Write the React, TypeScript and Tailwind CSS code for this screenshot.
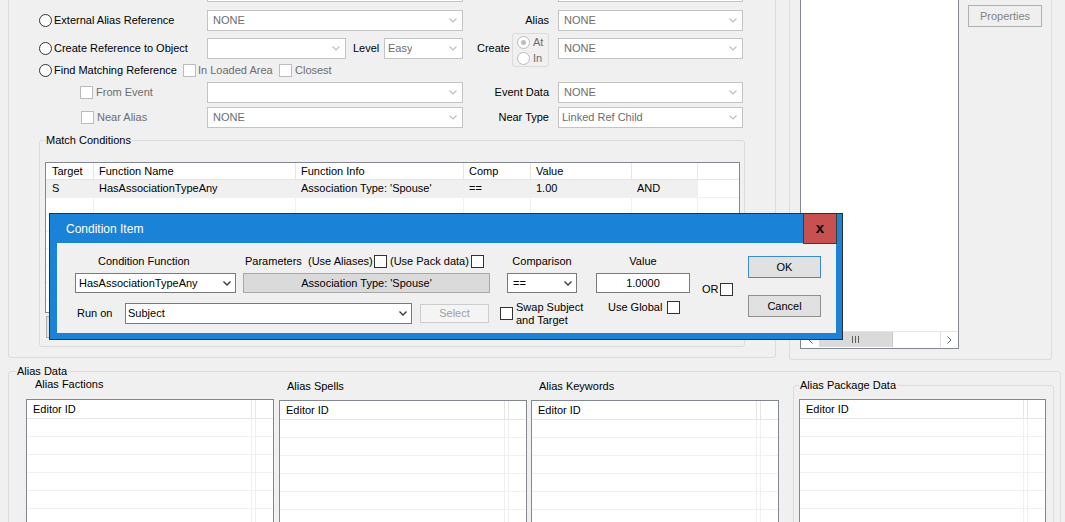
import clsx from 'clsx';

function Chevron({ dark = false }: { dark?: boolean }) {
  return (
    <svg width="8" height="5" viewBox="0 0 8 5" className="shrink-0">
      <path d="M0.5 0.5 L4 4 L7.5 0.5" fill="none" stroke={dark ? '#3a3a3a' : '#bdbdbd'} strokeWidth={dark ? 1.4 : 1.1} />
    </svg>
  );
}

function Combo({ text = '', dark = false, className = '' }: { text?: string; dark?: boolean; className?: string }) {
  return (
    <div
      className={clsx(
        'flex shrink-0 items-center justify-between border bg-white pr-[5px]',
        dark ? 'border-[#7a7a7a] text-black' : 'border-[#c4c4c4] pl-[5px] text-[#6d6d6d]',
        className
      )}
    >
      <span className="truncate">{text}</span>
      <Chevron dark={dark} />
    </div>
  );
}

function Check({ disabled = false }: { disabled?: boolean }) {
  return (
    <span
      className={clsx(
        'block h-[13px] w-[13px] shrink-0 border bg-white',
        disabled ? 'border-[#bcbcbc]' : 'border-[#333333]'
      )}
    />
  );
}

function Radio({ checked = false, disabled = false }: { checked?: boolean; disabled?: boolean }) {
  return (
    <span
      className={clsx(
        'flex h-[13px] w-[13px] shrink-0 items-center justify-center rounded-full border bg-white',
        disabled ? 'border-[#bcbcbc]' : 'border-[#333333]'
      )}
    >
      {checked && <span className={clsx('h-[5px] w-[5px] rounded-full', disabled ? 'bg-[#bcbcbc]' : 'bg-[#333333]')} />}
    </span>
  );
}

const matchCols = [
  { w: 'w-[48px] pl-[6px]', h: 'Target', v: 'S' },
  { w: 'w-[202px] pl-[5px]', h: 'Function Name', v: 'HasAssociationTypeAny' },
  { w: 'w-[168px] pl-[5px]', h: 'Function Info', v: "Association Type: 'Spouse'" },
  { w: 'w-[67px] pl-[5px]', h: 'Comp', v: '==' },
  { w: 'w-[101px] pl-[5px]', h: 'Value', v: '1.00' },
  { w: 'w-[66px] pl-[5px]', h: '', v: 'AND' },
];

function MatchList() {
  return (
    <div className="ml-[5px] mt-[15px] h-[151px] w-[695px] overflow-hidden border border-[#828790] bg-white">
      <div className="flex h-[17px] border-b border-[#e5e5e5]">
        {matchCols.map((c, i) => (
          <div key={i} className={clsx('shrink-0 border-r border-[#e5e5e5] leading-[16px]', c.w)}>
            {c.h}
          </div>
        ))}
      </div>
      <div className="flex h-[17px]">
        {matchCols.map((c, i) => (
          <div key={i} className={clsx('shrink-0 border-r border-[#f0f0f0] bg-[#f0f0f0] leading-[17px]', c.w)}>
            {c.v}
          </div>
        ))}
      </div>
      {[0, 1, 2, 3, 4, 5, 6].map((r) => (
        <div key={r} className="flex h-[17px] border-t border-[#f0f0f0]">
          {matchCols.map((c, i) => (
            <div key={i} className={clsx('shrink-0 border-r border-[#f0f0f0]', c.w)} />
          ))}
        </div>
      ))}
    </div>
  );
}

function EditorList({ className = '' }: { className?: string }) {
  return (
    <div className={clsx('h-[140px] overflow-hidden border border-[#828790] bg-white', className)}>
      <div className="flex h-[19px] border-b border-[#e5e5e5]">
        <div className="flex-1 border-r border-[#e5e5e5] pl-[6px] leading-[18px]">Editor ID</div>
        <div className="w-[4px] border-r border-[#e5e5e5]" />
        <div className="w-[17px]" />
      </div>
      {[0, 1, 2, 3, 4, 5, 6].map((r) => (
        <div key={r} className="flex h-[18px] border-b border-[#f0f0f0]">
          <div className="flex-1 border-r border-[#f0f0f0]" />
          <div className="w-[4px] border-r border-[#f0f0f0]" />
          <div className="w-[17px]" />
        </div>
      ))}
    </div>
  );
}

function LeftGroup() {
  return (
    <div className="ml-[8px] h-[358px] w-[768px] shrink-0 rounded-b-[3px] border-x border-b border-[#dcdcdc]">
      {/* row cut off at the top */}
      <div className="-mt-[18px] flex h-[20px]">
        <Combo className="ml-[198px] h-[20px] w-[256px]" />
        <Combo className="ml-[95px] h-[20px] w-[185px]" />
      </div>

      <div className="mt-[8px] flex h-[21px] items-center">
        <label className="ml-[30px] flex w-[168px] items-center gap-[2px]">
          <Radio />
          <span>External Alias Reference</span>
        </label>
        <Combo text="NONE" className="h-[21px] w-[256px]" />
        <span className="w-[86px] text-right">Alias</span>
        <Combo text="NONE" className="ml-[9px] h-[21px] w-[185px]" />
      </div>

      <div className="flex h-[34px] items-center">
        <label className="ml-[30px] flex w-[168px] items-center gap-[2px]">
          <Radio />
          <span>Create Reference to Object</span>
        </label>
        <Combo className="h-[21px] w-[139px]" />
        <span className="ml-[7px] w-[31px]">Level</span>
        <Combo text="Easy" className="h-[21px] w-[79px] !pl-[3px]" />
        <span className="w-[48px] pr-[1px] text-right">Create</span>
        <div className="ml-[1px] mt-[4px] flex h-[34px] w-[37px] flex-col justify-center gap-[3px] rounded-[3px] border border-[#dcdcdc] pl-[4px] text-[#6d6d6d]">
          <div className="flex items-center gap-[3px]">
            <Radio checked disabled />
            <span>At</span>
          </div>
          <div className="flex items-center gap-[3px]">
            <Radio disabled />
            <span>In</span>
          </div>
        </div>
        <Combo text="NONE" className="ml-[9px] h-[21px] w-[185px]" />
      </div>

      <div className="flex h-[10px] items-center">
        <label className="ml-[30px] flex w-[144px] items-center gap-[2px]">
          <Radio />
          <span>Find Matching Reference</span>
        </label>
        <div className="flex w-[96px] items-center gap-[2px] text-[#6d6d6d]">
          <Check disabled />
          <span>In Loaded Area</span>
        </div>
        <div className="flex items-center gap-[3px] text-[#6d6d6d]">
          <Check disabled />
          <span>Closest</span>
        </div>
      </div>

      <div className="mt-[7px] flex h-[21px] items-center">
        <div className="ml-[71px] flex w-[127px] items-center gap-[3px] text-[#6d6d6d]">
          <Check disabled />
          <span>From Event</span>
        </div>
        <Combo className="h-[21px] w-[256px]" />
        <span className="w-[86px] text-right">Event Data</span>
        <Combo text="NONE" className="ml-[9px] h-[21px] w-[185px]" />
      </div>

      <div className="mt-[4px] flex h-[21px] items-center">
        <div className="ml-[72px] flex w-[126px] items-center gap-[3px] text-[#6d6d6d]">
          <Check disabled />
          <span>Near Alias</span>
        </div>
        <Combo text="NONE" className="h-[21px] w-[256px]" />
        <span className="w-[86px] text-right">Near Type</span>
        <Combo text="Linked Ref Child" className="ml-[9px] h-[21px] w-[185px] !pl-[3px]" />
      </div>

      <fieldset className="ml-[30px] mt-[6px] h-[213px] w-[706px] rounded-[3px] border border-[#dcdcdc]">
        <legend className="ml-[5px] px-[1px] leading-[13px]">Match Conditions</legend>
        <MatchList />
        <div className="ml-[6px] mt-[3px] h-[22px] w-[70px] border border-[#adadad] bg-[#e1e1e1]" />
      </fieldset>
    </div>
  );
}

function RightGroup() {
  return (
    <div className="ml-[13px] flex h-[360px] w-[263px] shrink-0 rounded-b-[3px] border-x border-b border-[#dcdcdc]">
      <div className="ml-[10px] flex h-[349px] w-[159px] flex-col border-x border-b border-[#828790] bg-white">
        <div className="mx-[1px] mb-[1px] mt-auto flex h-[16px] border-t border-[#e6e6e6]">
          <div className="flex w-[17px] items-center justify-center">
            <svg width="5" height="8" viewBox="0 0 5 8">
              <path d="M4.5 0.5 L1 4 L4.5 7.5" fill="none" stroke="#606060" />
            </svg>
          </div>
          <div className="flex w-[74px] items-center justify-center border-r border-[#c8c8c8] bg-[#dadada]">
            <svg width="7" height="7" viewBox="0 0 7 7">
              <path d="M0.5 0 V7 M3.5 0 V7 M6.5 0 V7" stroke="#606060" />
            </svg>
          </div>
          <div className="flex-1" />
          <div className="flex w-[17px] items-center justify-center border-l border-[#e0e0e0]">
            <svg width="5" height="8" viewBox="0 0 5 8">
              <path d="M0.5 0.5 L4 4 L0.5 7.5" fill="none" stroke="#606060" />
            </svg>
          </div>
        </div>
      </div>
      <button className="ml-[9px] mt-[5px] h-[22px] w-[74px] border border-[#b0b0b0] bg-[#efefef] text-[#838383]">
        Properties
      </button>
    </div>
  );
}

function AliasData() {
  return (
    <fieldset className="ml-[8px] mt-[5px] h-[200px] w-[1053px] rounded-[3px] border border-[#dcdcdc]">
      <legend className="ml-[7px] px-[1px] leading-[13px]">Alias Data</legend>
      <div className="flex items-start">
        <div className="ml-[17px] w-[248px]">
          <div className="pl-[9px]">Alias Factions</div>
          <EditorList className="mt-[8px]" />
        </div>
        <div className="ml-[5px] w-[248px]">
          <div className="mt-[2px] pl-[8px]">Alias Spells</div>
          <EditorList className="mt-[7px]" />
        </div>
        <div className="ml-[4px] w-[248px]">
          <div className="mt-[2px] pl-[8px]">Alias Keywords</div>
          <EditorList className="mt-[7px]" />
        </div>
        <fieldset className="ml-[14px] mt-[1px] h-[160px] w-[261px] rounded-[3px] border border-[#dcdcdc]">
          <legend className="ml-[5px] px-[1px] leading-[13px]">Alias Package Data</legend>
          <EditorList className="ml-[5px] mt-[7px] w-[247px]" />
        </fieldset>
      </div>
    </fieldset>
  );
}

function ConditionDialog() {
  return (
    <div className="absolute left-[49px] top-[213px] h-[127px] w-[794px] border border-[#2f2f2f] bg-[#1a83d8]">
      <div className="flex h-[29px]">
        <div className="flex-1 pl-[16px] text-[12px] leading-[30px] text-white">Condition Item</div>
        <div className="mr-[5px] flex h-[30px] w-[34px] items-center justify-center border-x border-b border-[#3c3c3c] bg-[#c75050] pb-[3px] text-[15px] font-bold text-black">
          x
        </div>
      </div>
      <div className="ml-[7px] flex h-[90px] w-[779px] bg-[#f0f0f0]">
        <div className="w-[640px] shrink-0">
          <div className="mt-[11px] flex h-[14px] items-center">
            <span className="w-[186px] pl-[41px]">Condition Function</span>
            <span className="w-[131px] whitespace-pre pl-[2px]">Parameters  (Use Aliases)</span>
            <Check />
            <span className="w-[84px] pl-[3px]">(Use Pack data)</span>
            <Check />
            <span className="ml-[23px] w-[70px] text-center">Comparison</span>
            <span className="ml-[19px] w-[94px] text-center">Value</span>
          </div>
          <div className="mt-[5px] flex h-[20px] items-center">
            <Combo dark text="HasAssociationTypeAny" className="ml-[18px] h-[20px] w-[161px] pl-[3px] !pr-[4px]" />
            <div className="ml-[7px] flex h-[20px] w-[247px] items-center justify-center border border-[#a8a8a8] bg-[#dadada]">
              Association Type: 'Spouse'
            </div>
            <Combo dark text="==" className="ml-[17px] h-[20px] w-[70px] pl-[5px] !pr-[4px]" />
            <div className="ml-[19px] flex h-[20px] w-[94px] items-center justify-center border border-[#7a7a7a] bg-white">
              1.0000
            </div>
          </div>
          <div className="mt-[10px] flex h-[21px] items-center">
            <span className="w-[68px] pl-[20px]">Run on</span>
            <Combo dark text="Subject" className="h-[21px] w-[287px] pl-[2px] !pr-[4px]" />
            <div className="ml-[8px] flex h-[19px] w-[69px] items-center justify-center border border-[#cccccc] bg-[#f4f4f4] text-[#a0a0a0]">
              Select
            </div>
            <div className="ml-[11px]">
              <Check />
            </div>
            <div className="ml-[3px] w-[89px] leading-[13px]">
              Swap Subject
              <br />
              and Target
            </div>
            <div className="-mt-[2px] ml-[3px] flex h-[13px] items-center self-start">
              <span className="w-[59px]">Use Global</span>
              <Check />
            </div>
          </div>
        </div>
        <div className="ml-[5px] mt-[40px] flex h-[13px] items-center">
          <span className="w-[18px]">OR</span>
          <Check />
        </div>
        <div className="ml-[15px] flex flex-col">
          <button className="mt-[13px] h-[22px] w-[73px] border border-[#3c8ad0] bg-[#e1e1e1]">OK</button>
          <button className="mt-[17px] h-[22px] w-[73px] border border-[#8f8f8f] bg-[#e1e1e1]">Cancel</button>
        </div>
      </div>
    </div>
  );
}

export default function App() {
  return (
    <div className="relative h-[522px] w-[1065px] overflow-hidden bg-[#f0f0f0] font-['Liberation_Sans',Arial,sans-serif] text-[11px] leading-[13px] text-black">
      <div className="flex items-start">
        <LeftGroup />
        <RightGroup />
      </div>
      <AliasData />
      <ConditionDialog />
    </div>
  );
}
